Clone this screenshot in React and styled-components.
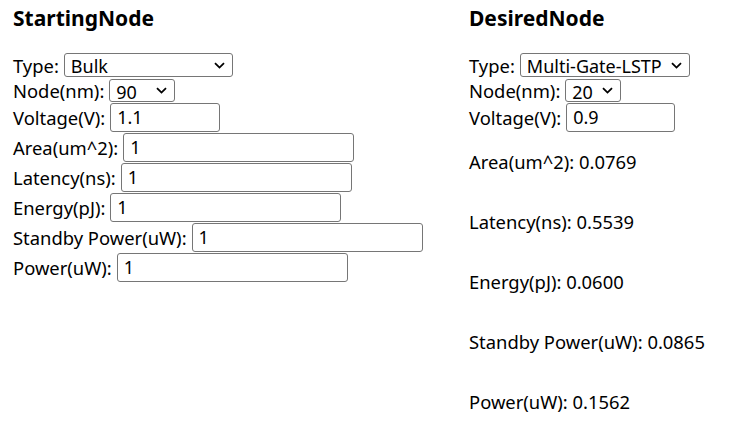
import React from "react";
import styled, { createGlobalStyle } from "styled-components";

const GlobalStyle = createGlobalStyle`
  html, body {
    margin: 0;
    background: #ffffff;
  }
  body {
    padding: 8px;
    font-family: "Noto Sans", "Open Sans", sans-serif;
    color: #000000;
  }
`;

const Page = styled.div`
  display: grid;
  grid-template-columns: 456px auto;
  padding: 0 5px;
`;

const Column = styled.section`
  min-width: 0;
`;

const Title = styled.h3`
  margin: -4px 0 20px;
  font-size: 21px;
  font-weight: 700;
  line-height: 28px;
`;

const Field = styled.div`
  display: flex;
  align-items: center;
  height: ${(p) => p.$h || 30}px;
  font-size: 18.4px;
  white-space: nowrap;
`;

const Label = styled.label`
  margin-right: 5px;
`;

const SelectWrap = styled.span`
  position: relative;
  display: inline-flex;
  width: ${(p) => p.$w}px;
  height: ${(p) => p.$h || 24}px;
`;

const Select = styled.select`
  appearance: none;
  box-sizing: border-box;
  width: 100%;
  height: 100%;
  margin: 0;
  padding: 0 20px 0 6px;
  font-family: inherit;
  font-size: 18px;
  color: #000000;
  background: #ffffff;
  border: 1px solid #767676;
  border-radius: 3px;
`;

const Chevron = styled.svg`
  position: absolute;
  right: 8px;
  top: 50%;
  width: 11px;
  height: 7px;
  margin-top: -3px;
  pointer-events: none;
`;

const Input = styled.input`
  box-sizing: border-box;
  width: ${(p) => p.$w || 231}px;
  height: 29px;
  padding: 0 6px;
  font-family: inherit;
  font-size: 18px;
  color: #000000;
  border: 1px solid #767676;
  border-radius: 3px;
`;

const Result = styled.p`
  margin: 0;
  padding: 18px 0;
  font-size: 18.4px;
  line-height: 24px;
  white-space: nowrap;
`;

const TYPES = ["Bulk", "SOI", "Multi-Gate-HP", "Multi-Gate-LSTP"];
const NODES_START = ["180", "130", "90", "65", "45", "32"];
const NODES_DESIRED = ["20", "16", "14", "10", "7"];

const startFields = [
  { label: "Voltage(V):", value: "1.1", w: 110 },
  { label: "Area(um^2):", value: "1" },
  { label: "Latency(ns):", value: "1" },
  { label: "Energy(pJ):", value: "1" },
  { label: "Standby Power(uW):", value: "1" },
  { label: "Power(uW):", value: "1" },
];

const results = [
  ["Area(um^2)", "0.0769"],
  ["Latency(ns)", "0.5539"],
  ["Energy(pJ)", "0.0600"],
  ["Standby Power(uW)", "0.0865"],
  ["Power(uW)", "0.1562"],
];

function Dropdown({ w, h, options, value }) {
  return (
    <SelectWrap $w={w} $h={h}>
      <Select defaultValue={value}>
        {options.map((o) => (
          <option key={o}>{o}</option>
        ))}
      </Select>
      <Chevron viewBox="0 0 11 7">
        <path
          d="M1 1.2 L5.5 5.6 L10 1.2"
          fill="none"
          stroke="#000"
          strokeWidth="1.8"
        />
      </Chevron>
    </SelectWrap>
  );
}

export default function App() {
  return (
    <>
      <GlobalStyle />
      <Page>
        <Column>
          <Title>StartingNode</Title>
          <Field $h={26}>
            <Label>Type:</Label>
            <Dropdown w={169} options={TYPES} value="Bulk" />
          </Field>
          <Field $h={24}>
            <Label>Node(nm):</Label>
            <Dropdown w={66} h={23} options={NODES_START} value="90" />
          </Field>
          {startFields.map((f) => (
            <Field key={f.label}>
              <Label>{f.label}</Label>
              <Input $w={f.w} defaultValue={f.value} />
            </Field>
          ))}
        </Column>
        <Column>
          <Title>DesiredNode</Title>
          <Field $h={26}>
            <Label>Type:</Label>
            <Dropdown w={170} options={TYPES} value="Multi-Gate-LSTP" />
          </Field>
          <Field $h={24}>
            <Label>Node(nm):</Label>
            <Dropdown w={56} h={23} options={NODES_DESIRED} value="20" />
          </Field>
          <Field>
            <Label>Voltage(V):</Label>
            <Input $w={109} defaultValue="0.9" />
          </Field>
          {results.map(([k, v]) => (
            <Result key={k}>
              {k}: {v}
            </Result>
          ))}
        </Column>
      </Page>
    </>
  );
}
